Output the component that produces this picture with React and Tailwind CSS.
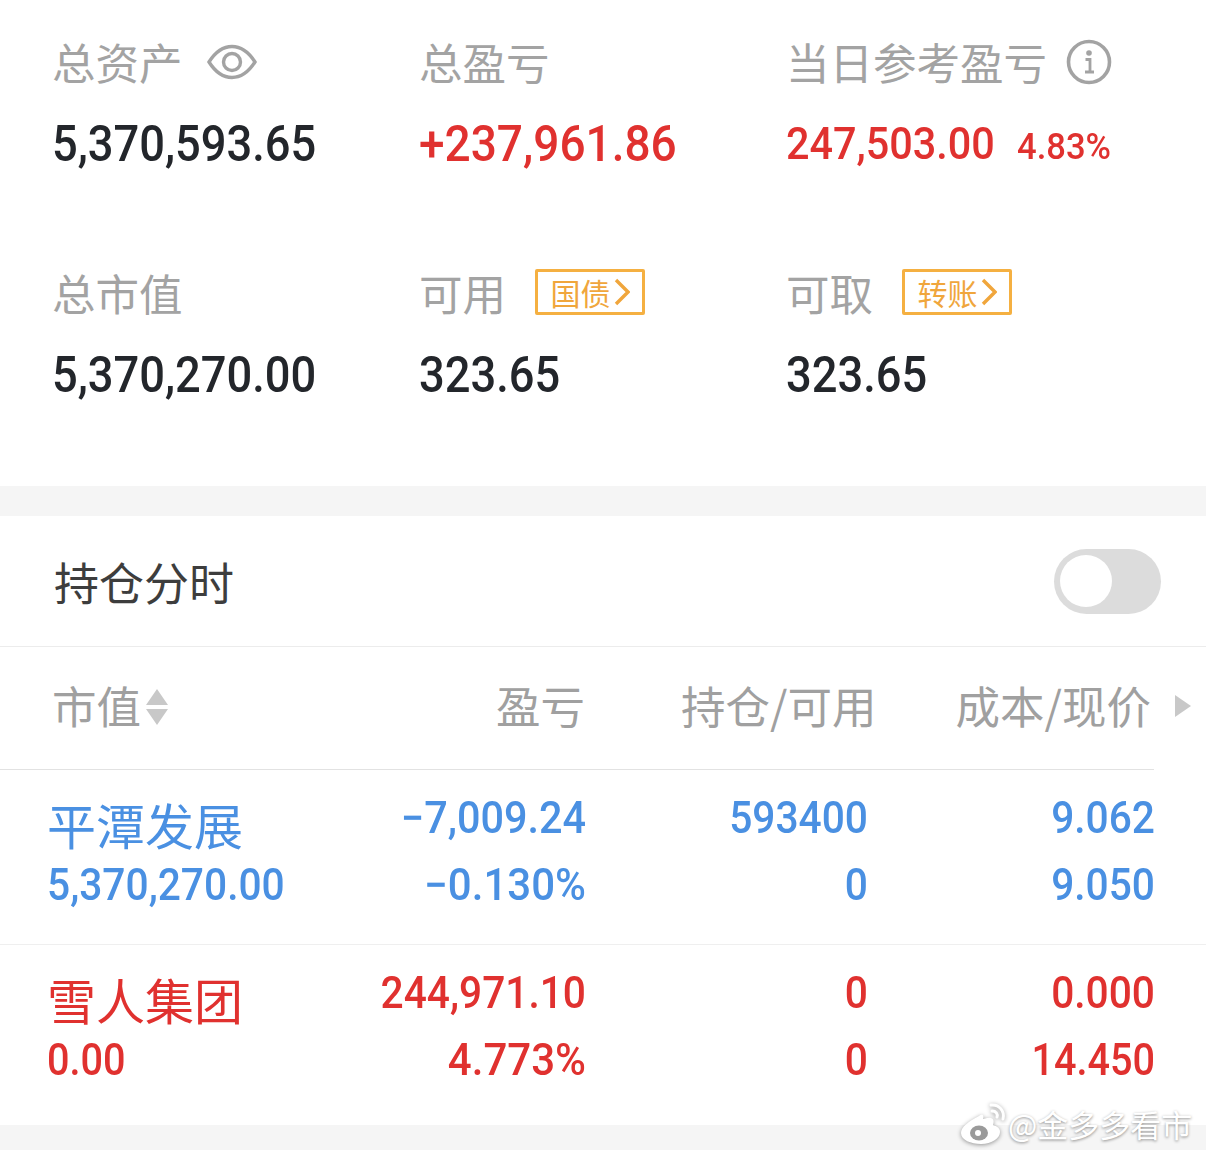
const CJK = "font-['Noto_Sans_CJK_SC','Noto_Sans',sans-serif]";

function Num({ children, className = "" }) {
  return (
    <div className={`font-['Roboto',sans-serif] font-medium whitespace-nowrap ${className}`}>{children}</div>
  );
}

function Eye() {
  return (
    <svg width="50" height="38" viewBox="0 0 50 38" fill="none" stroke="#a3a3a3" strokeWidth="3.4">
      <path d="M2 19 C9 8 16 3.5 25 3.5 C34 3.5 41 8 48 19 C41 30 34 34.5 25 34.5 C16 34.5 9 30 2 19 Z" />
      <circle cx="25" cy="19" r="8.5" />
    </svg>
  );
}

function Info() {
  return (
    <svg width="46" height="46" viewBox="0 0 46 46" fill="none" stroke="#a3a3a3">
      <circle cx="23" cy="23" r="20.5" strokeWidth="3.6" />
      <circle cx="23" cy="14" r="2.8" fill="#a3a3a3" stroke="none" />
      <path d="M19.5 20.5 H24 V32 M19 33 H28" strokeWidth="2.8" />
    </svg>
  );
}

function Tag({ children }) {
  return (
    <div className="flex items-center justify-center w-[110px] h-[46px] border-[3px] border-[#f5b041] rounded-[2px] text-[#f0a63c] text-[30px] leading-none ml-[29px] -mt-[3px]">
      <span>{children}</span>
      <svg width="16" height="28" viewBox="0 0 16 28" fill="none" stroke="#f0a63c" strokeWidth="3.4" className="ml-[3px]">
        <path d="M2 2 L14 14 L2 26" />
      </svg>
    </div>
  );
}

function Label({ children }) {
  return <div className="text-[43.5px] leading-[50px] text-[#a3a3a3] whitespace-nowrap">{children}</div>;
}

function Stat({ label, extra, value, small, color = "text-[#23262b]", valueClass = "text-[50px] scale-x-[0.905]" }) {
  return (
    <div>
      <div className="flex items-center h-[50px]">
        <Label>{label}</Label>
        {extra}
      </div>
      <div className="flex items-baseline mt-[32px] h-[50px]">
        <Num className={`origin-left leading-[50px] ${valueClass} ${color}`}>{value}</Num>
        {small && <Num className={`origin-left text-[36px] scale-x-[0.96] leading-[50px] ml-[9px] ${color}`}>{small}</Num>}
      </div>
    </div>
  );
}

function HeadCell({ children, className = "" }) {
  return <div className={`shrink-0 text-[44.5px] leading-[50px] text-[#a0a0a0] whitespace-nowrap ${className}`}>{children}</div>;
}

function Row({ name, mv, a, b, c, d, e, f, color, aClass = "scale-x-[0.94]", fClass = "scale-x-[0.925]", mvClass = "scale-x-[0.925]" }) {
  const right = "origin-right text-right text-[44px] scale-x-[0.925] leading-[58px]";
  const pct = "origin-right text-right text-[44px] scale-x-[0.955] leading-[58px] mt-[5px]";
  return (
    <div className={`grid grid-cols-[239px_300px_282px_287px] pl-[47px] ${color}`}>
      <div className="text-[49px] leading-[70px] -mb-[8px] whitespace-nowrap">{name}</div>
      <Num className={`origin-right text-right text-[44px] leading-[58px] ${aClass}`}>{a}</Num>
      <Num className={right}>{c}</Num>
      <Num className={right}>{e}</Num>
      <Num className={`origin-left text-[44px] leading-[58px] mt-[5px] ${mvClass}`}>{mv}</Num>
      <Num className={pct}>{b}</Num>
      <Num className={`${right} mt-[5px]`}>{d}</Num>
      <Num className={`origin-right text-right text-[44px] leading-[58px] mt-[5px] ${fClass}`}>{f}</Num>
    </div>
  );
}

export default function App() {
  return (
    <div className={`relative w-[1206px] h-[1155px] bg-white overflow-hidden ${CJK}`}>
      {/* summary */}
      <div className="h-[486px] pl-[52px] pt-[37px]">
        <div className="grid grid-cols-[367px_367px_367px]">
          <Stat label="总资产" extra={<div className="ml-[24px]"><Eye /></div>} value="5,370,593.65" />
          <Stat label="总盈亏" value="+237,961.86" valueClass="text-[50px] scale-x-[0.92]" color="text-[#e0312f]" />
          <Stat
            label="当日参考盈亏"
            extra={<div className="ml-[19px]"><Info /></div>}
            value="247,503.00"
            valueClass="text-[44px] scale-x-[0.94]"
            small="4.83%"
            color="text-[#e0312f]"
          />
        </div>
        <div className="grid grid-cols-[367px_367px_367px] mt-[99px]">
          <Stat label="总市值" value="5,370,270.00" />
          <Stat label="可用" extra={<Tag>国债</Tag>} value="323.65" />
          <Stat label="可取" extra={<Tag>转账</Tag>} value="323.65" />
        </div>
      </div>

      <div className="h-[30px] bg-[#f5f5f5]" />

      {/* holdings toggle */}
      <div className="h-[131px] flex items-center justify-between pl-[54px] pr-[45px] border-b border-[#ececec]">
        <div className="text-[45px] leading-none text-[#3d3d3d]">持仓分时</div>
        <div className="w-[107px] h-[65px] rounded-full bg-[#dcdcdc] flex items-center pl-[6px]">
          <div className="w-[52px] h-[52px] rounded-full bg-white" />
        </div>
      </div>

      {/* header */}
      <div className="relative h-[123px] flex items-center border-b border-[#e2e2e2] mr-[52px] pl-[52px]">
        <HeadCell className="-mt-[6px]">市值</HeadCell>
        <svg width="24" height="38" viewBox="0 0 24 38" fill="#c8c8c8" className="shrink-0 ml-[4px] -mt-[2px]">
          <path d="M12 1 L23 17 H1 Z M1 21 H23 L12 37 Z" />
        </svg>
        <HeadCell className="ml-[327px] -mt-[6px]">盈亏</HeadCell>
        <HeadCell className="ml-[96px] -mt-[6px]">持仓/可用</HeadCell>
        <HeadCell className="ml-[79px] -mt-[6px]">成本/现价</HeadCell>
        <svg width="16" height="22" viewBox="0 0 16 22" fill="#c8c8c8" className="absolute right-[-37px] top-[48px]">
          <path d="M0 0 L16 11 L0 22 Z" />
        </svg>
      </div>

      {/* rows */}
      <div className="h-[175px] pt-[19px] border-b border-[#efefef]">
        <Row
          name="平潭发展"
          mv="5,370,270.00"
          a="−7,009.24"
          b="−0.130%"
          c="593400"
          d="0"
          e="9.062"
          f="9.050"
          color="text-[#4a90e2]"
        />
      </div>
      <div className="h-[180px] pt-[19px]">
        <Row
          name="雪人集团"
          mv="0.00"
          a="244,971.10"
          aClass="scale-x-[0.925]"
          b="4.773%"
          c="0"
          d="0"
          e="0.000"
          f="14.450"
          fClass="scale-x-[0.9]"
          mvClass="scale-x-[0.9]"
          color="text-[#e0312f]"
        />
      </div>
      <div className="h-[25px] bg-[#f5f5f5]" />

      {/* watermark */}
      <div className="absolute left-[959px] top-[1101px] flex items-center text-white text-[31px] leading-none [text-shadow:0_1px_3px_rgba(0,0,0,0.45)]">
        <svg width="48" height="44" viewBox="0 0 48 44" className="drop-shadow-[0_1px_2px_rgba(0,0,0,0.4)]">
          <path d="M20 15 C10 20 2 26 2 32 C2 39 12 43 22 43 C33 43 41 37 41 31 C41 26 36 25 34 24 C35 21 35 18 32 17 C29 16 25 18 24 18 C25 15 24 12 20 15 Z" fill="#fff" />
          <ellipse cx="20" cy="32" rx="9" ry="7.5" fill="#9a9a9a" />
          <circle cx="19" cy="32" r="3" fill="#fff" />
          <path d="M32 4 C40 3 46 10 44 18 M33 10 C37 10 39 13 38 16" fill="none" stroke="#fff" strokeWidth="3" strokeLinecap="round" />
        </svg>
        <span className="ml-[1px]">@金多多看市</span>
      </div>
    </div>
  );
}
